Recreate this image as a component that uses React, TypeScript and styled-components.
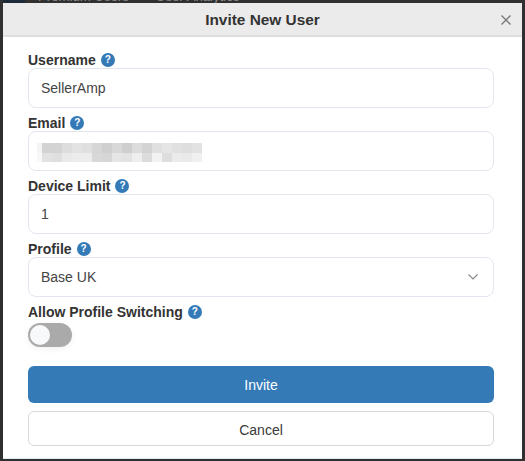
import React from 'react'
import styled, { createGlobalStyle, css } from 'styled-components'

const GlobalStyle = createGlobalStyle`
  html, body {
    margin: 0;
    padding: 0;
    background: #303030;
  }
  * {
    box-sizing: border-box;
  }
`

const topShades = ['#f4f4f4', '#d3d3d3', '#d3d3d3', '#dddddd', '#e3e3e3', '#dfdfdf', '#d6d6d6', '#cfcfcf', '#d8d8d8', '#cecece', '#dcdcdc', '#d3d3d3', '#e0e0e0', '#e5e5e5', '#e0e0e0', '#dedede', '#e2e2e2']
const bottomShades = ['#f8f8f8', '#e2e2e2', '#dfdfdf', '#eaeaea', '#ececec', '#ececec', '#d8d8d8', '#d6d6d6', '#e6e6e6', '#e3e3e3', '#eeeeee', '#dcdcdc', '#f2f2f2', '#dedede', '#ebebeb', '#e9e9e9', '#f0f0f0']

function HelpIcon() {
  return <Help>?</Help>
}

function App() {
  return (
    <Backdrop>
      <GlobalStyle />
      <NavCorner />
      <BehindTabs>
        <span>Premium Users</span>
        <span>User Analytics</span>
      </BehindTabs>
      <Modal>
        <Header>
          <Title>Invite New User</Title>
          <Close aria-label='Close'>
            <svg width='10' height='10' viewBox='0 0 10 10'>
              <path d='M.5.5 9.5 9.5M9.5.5.5 9.5' stroke='#777' strokeWidth='1.3' fill='none' />
            </svg>
          </Close>
        </Header>
        <Body>
          <Field>
            <Label>Username <HelpIcon /></Label>
            <Input value='SellerAmp' readOnly />
          </Field>
          <Field>
            <Label>Email <HelpIcon /></Label>
            <RedactedInput>
              <Redacted>
                {topShades.map((c, i) => <Cell key={'t' + i} $shade={c} />)}
                {bottomShades.map((c, i) => <Cell key={'b' + i} $shade={c} />)}
              </Redacted>
            </RedactedInput>
          </Field>
          <Field>
            <Label>Device Limit <HelpIcon /></Label>
            <Input value='1' readOnly />
          </Field>
          <Field>
            <Label>Profile <HelpIcon /></Label>
            <SelectWrap>
              <Select defaultValue='base'>
                <option value='base'>Base UK</option>
              </Select>
              <Chevron width='10' height='6' viewBox='0 0 10 6'>
                <path d='M.5.5 5 5 9.5.5' stroke='#888' strokeWidth='1.2' fill='none' />
              </Chevron>
            </SelectWrap>
          </Field>
          <SwitchField>
            <Label>Allow Profile Switching <HelpIcon /></Label>
            <Switch>
              <Knob />
            </Switch>
          </SwitchField>
          <InviteButton>Invite</InviteButton>
          <CancelButton>Cancel</CancelButton>
        </Body>
      </Modal>
    </Backdrop>
  )
}

export default App

const Backdrop = styled.div`
  position: relative;
  width: 525px;
  height: 461px;
  padding: 3px 3px 2px;
  overflow: hidden;
  background: #303030;
  font-family: 'Liberation Sans', Arial, sans-serif;
`

const NavCorner = styled.div`
  position: absolute;
  top: 0;
  left: 3px;
  width: 22px;
  height: 3px;
  background: #1c2b3a;
`

const BehindTabs = styled.div`
  position: absolute;
  top: -11px;
  left: 38px;
  display: flex;
  gap: 27px;
  font-size: 13.2px;
  color: #8a8a8a;
`

const Modal = styled.div`
  position: relative;
  height: 456px;
  display: flex;
  flex-direction: column;
  background: #fff;
  border-bottom: 1px solid #e4eaf0;
`

const Header = styled.div`
  position: relative;
  height: 34px;
  flex-shrink: 0;
  display: flex;
  align-items: center;
  justify-content: center;
  background: #ebebeb;
  border-bottom: 2px solid #dedede;
`

const Title = styled.h1`
  margin: 0;
  padding-top: 1px;
  font-size: 15.4px;
  font-weight: 700;
  color: #333;
`

const Close = styled.button`
  position: absolute;
  top: 12px;
  right: 11px;
  width: 10px;
  height: 10px;
  padding: 0;
  display: flex;
  border: 0;
  background: none;
`

const Body = styled.div`
  display: flex;
  flex-direction: column;
  padding: 8px 28px 0 25px;
`

const Field = styled.div`
  display: flex;
  flex-direction: column;
  height: 63px;
`

const Label = styled.label`
  height: 23px;
  padding-top: 6px;
  display: flex;
  align-items: center;
  gap: 5px;
  font-size: 14px;
  font-weight: 700;
  color: #333;
`

const Help = styled.span`
  width: 14px;
  height: 14px;
  display: flex;
  align-items: center;
  justify-content: center;
  border-radius: 50%;
  background: #337ab7;
  color: #fff;
  font-size: 10px;
  font-weight: 700;
`

const fieldBox = css`
  width: 100%;
  height: 40px;
  border: 1px solid #e2e7ef;
  border-radius: 8px;
  background: #fff;
`

const Input = styled.input`
  ${fieldBox}
  padding: 0 12px;
  outline: none;
  font-family: inherit;
  font-size: 14px;
  color: #444;
`

const RedactedInput = styled.div`
  ${fieldBox}
  padding: 11px 0 0 8px;
`

const Redacted = styled.div`
  display: grid;
  grid-template-columns: 5px repeat(16, 10px);
  grid-auto-rows: 9.5px;
`

const Cell = styled.span<{ $shade: string }>`
  background: ${(p) => p.$shade};
`

const SelectWrap = styled.div`
  position: relative;
`

const Select = styled.select`
  ${fieldBox}
  display: block;
  padding: 0 12px;
  appearance: none;
  outline: none;
  font-family: inherit;
  font-size: 14px;
  color: #444;
`

const Chevron = styled.svg`
  position: absolute;
  top: 17px;
  right: 16px;
`

const SwitchField = styled.div`
  display: flex;
  flex-direction: column;
  height: 69px;
`

const Switch = styled.div`
  width: 44px;
  height: 24px;
  margin-top: 3px;
  padding: 2px;
  border-radius: 12px;
  background: #aaa;
  box-shadow: 0 2px 6px rgba(0, 0, 0, 0.06);
`

const Knob = styled.div`
  width: 20px;
  height: 20px;
  border-radius: 50%;
  background: #f8f9fb;
`

const InviteButton = styled.button`
  width: 100%;
  height: 37px;
  border: 0;
  border-radius: 6px;
  background: #337ab7;
  color: #fff;
  font-family: inherit;
  font-size: 14px;
`

const CancelButton = styled.button`
  width: 100%;
  height: 35px;
  margin-top: 8px;
  padding-top: 3px;
  border: 1px solid #d8d8d8;
  border-radius: 6px;
  background: #fff;
  color: #3a3a3a;
  font-family: inherit;
  font-size: 14px;
`
